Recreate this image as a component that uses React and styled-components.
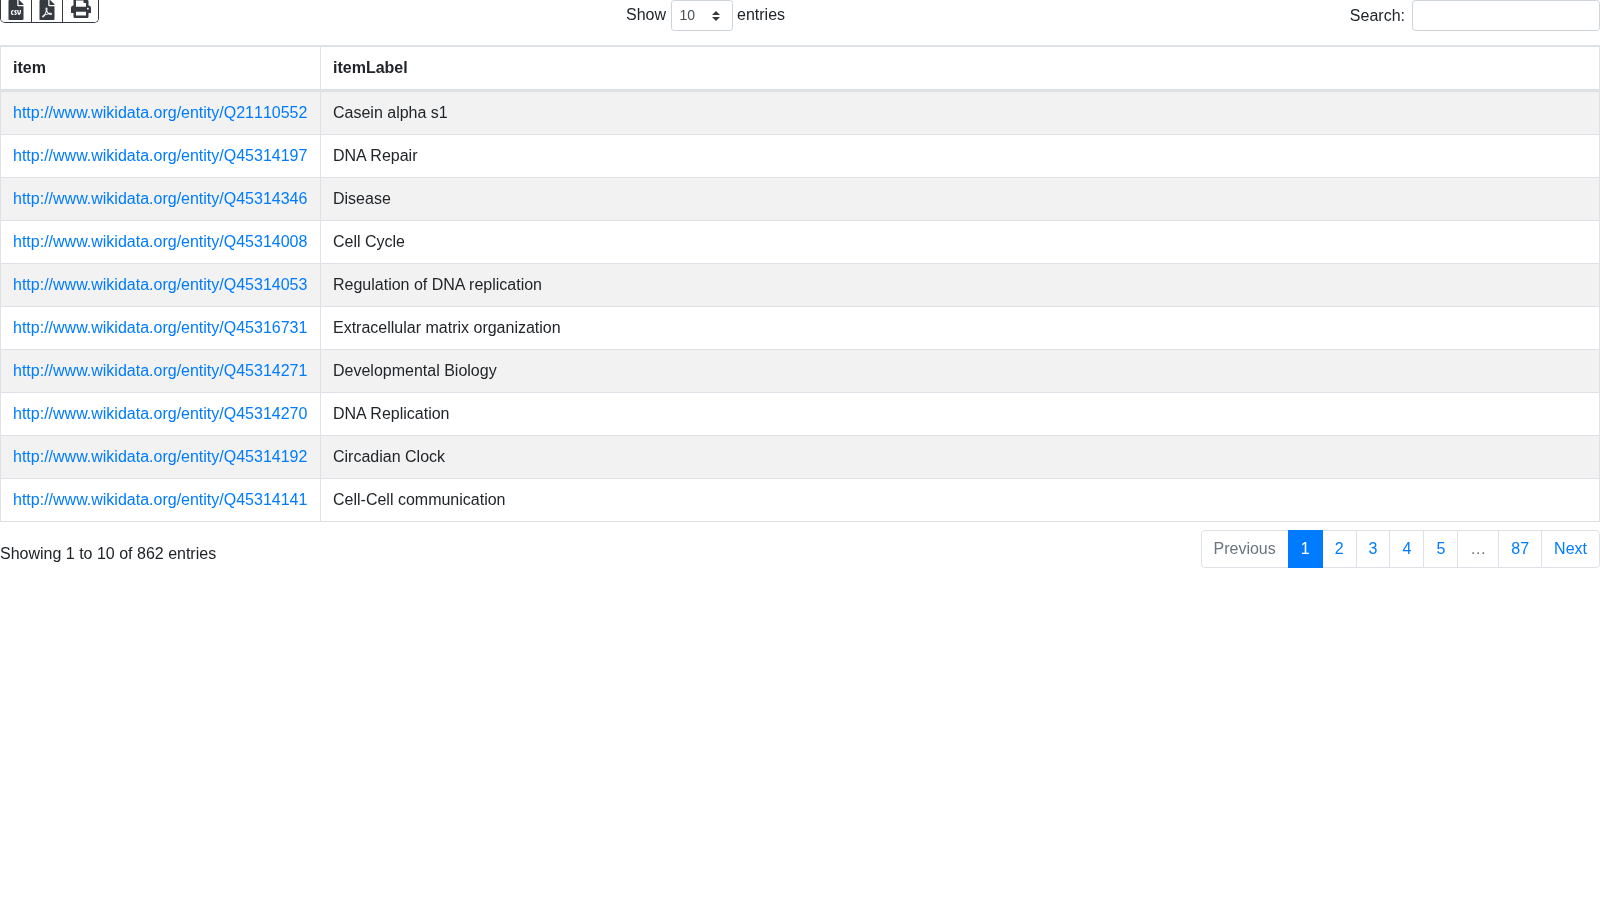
import React from 'react';
import styled, { createGlobalStyle } from 'styled-components';
import { FaFileCsv, FaFilePdf, FaPrint } from 'react-icons/fa';

const GlobalStyle = createGlobalStyle`
  html, body {
    margin: 0;
    background: #fff;
    color: #212529;
    font-family: "Liberation Sans", Arial, sans-serif;
    font-size: 16px;
  }
`;

const Page = styled.div`
  width: 1600px;
  height: 900px;
  overflow: hidden;
  will-change: transform;
`;

const TopBar = styled.div`
  display: grid;
  grid-template-columns: 626px 1fr auto;
  height: 45px;
  line-height: 24px;
`;

const ButtonGroup = styled.div`
  display: flex;
  align-self: flex-start;
  justify-self: start;
  height: 23px;
  border: 1px solid #343a40;
  border-top: 0;
  border-radius: 0 0 5px 5px;
  overflow: hidden;
  box-sizing: border-box;
`;

const IconButton = styled.button`
  display: flex;
  justify-content: center;
  align-items: flex-end;
  box-sizing: border-box;
  width: ${(p) => p.$width}px;
  height: 100%;
  margin: 0;
  padding: 0 0 ${(p) => p.$lift || 2}px;
  background: #fff;
  border: 0;
  border-right: 1px solid #343a40;
  color: #343a40;
  font-size: 20px;
  overflow: hidden;

  svg {
    flex-shrink: 0;
  }

  &:last-child {
    border-right: 0;
  }
`;

const LengthLabel = styled.label`
  display: flex;
  align-items: flex-start;
  height: 31px;
  gap: 4.5px;
  padding-top: 3px;
  line-height: 24px;
`;

const SelectBox = styled.span`
  position: relative;
  top: -3px;
  display: block;
  box-sizing: border-box;
  width: 62px;
  height: 31px;
  padding: 0 8px;
  border: 1px solid #ced4da;
  border-radius: 3.2px;
  color: #495057;
  font-size: 14px;
  line-height: 29px;
`;

const SelectArrows = styled.svg`
  position: absolute;
  top: 10px;
  right: 12px;
  width: 8px;
  height: 10px;
`;

const SearchLabel = styled.label`
  display: flex;
  align-items: flex-start;
  gap: 7px;
  padding-top: 4px;
`;

const SearchInput = styled.input`
  position: relative;
  top: -4px;
  box-sizing: border-box;
  width: 188px;
  height: 31px;
  padding: 4px 8px;
  border: 1px solid #ced4da;
  border-radius: 3.2px;
  outline: 0;
`;

const Table = styled.table`
  width: 100%;
  border-collapse: separate;
  border-spacing: 0;
  border: 1px solid #dee2e6;
  color: #212529;
`;

const HeadCell = styled.th`
  padding: 12px;
  border-top: 1px solid #dee2e6;
  border-right: 1px solid #dee2e6;
  border-bottom: 2px solid #dee2e6;
  text-align: left;
  font-weight: 700;
  width: ${(p) => p.$width || 'auto'};

  &:last-child {
    border-right: 0;
  }
`;

const Row = styled.tr`
  background: ${(p) => (p.$odd ? 'rgba(0, 0, 0, 0.05)' : 'transparent')};
`;

const Cell = styled.td`
  padding: 12px;
  border-top: 1px solid #dee2e6;
  border-right: 1px solid #dee2e6;

  &:last-child {
    border-right: 0;
  }
`;

const Link = styled.a`
  color: #007bff;
  text-decoration: none;
`;

// the reference does not tighten the "11" pair in the ids
const EntityId = styled.span`
  font-kerning: none;
`;

const Footer = styled.div`
  display: flex;
  justify-content: space-between;
  align-items: flex-start;
  padding-top: 8px;
`;

const Info = styled.div`
  padding-top: 12px;
  line-height: 24px;
`;

const Pagination = styled.ul`
  display: flex;
  margin: 0;
  padding: 0;
  list-style: none;
`;

const PageItem = styled.li`
  box-sizing: content-box;
  margin-left: -1px;
  padding: 8px 12px;
  border: 1px solid ${(p) => (p.$active ? '#007bff' : '#dee2e6')};
  background: ${(p) => (p.$active ? '#007bff' : '#fff')};
  color: ${(p) => (p.$active ? '#fff' : p.$disabled ? '#6c757d' : '#007bff')};
  line-height: 20px;
  position: ${(p) => (p.$active ? 'relative' : 'static')};

  &:first-child {
    margin-left: 0;
    border-radius: 4px 0 0 4px;
  }
  &:last-child {
    border-radius: 0 4px 4px 0;
  }
`;

const rows = [
  ['Q21110552', 'Casein alpha s1'],
  ['Q45314197', 'DNA Repair'],
  ['Q45314346', 'Disease'],
  ['Q45314008', 'Cell Cycle'],
  ['Q45314053', 'Regulation of DNA replication'],
  ['Q45316731', 'Extracellular matrix organization'],
  ['Q45314271', 'Developmental Biology'],
  ['Q45314270', 'DNA Replication'],
  ['Q45314192', 'Circadian Clock'],
  ['Q45314141', 'Cell-Cell communication'],
];

const pages = [
  { label: 'Previous', disabled: true },
  { label: '1', active: true },
  { label: '2' },
  { label: '3' },
  { label: '4' },
  { label: '5' },
  { label: '…', disabled: true },
  { label: '87' },
  { label: 'Next' },
];

const App = () => (
  <Page>
    <GlobalStyle />
    <TopBar>
      <ButtonGroup>
        <IconButton $width={31} aria-label='CSV'>
          <FaFileCsv />
        </IconButton>
        <IconButton $width={31} aria-label='PDF'>
          <FaFilePdf />
        </IconButton>
        <IconButton $width={35} $lift={4} aria-label='Print'>
          <FaPrint />
        </IconButton>
      </ButtonGroup>
      <LengthLabel>
        Show
        <SelectBox>
          10
          <SelectArrows viewBox='0 0 8 10'>
            <path d='M4 0 0 4h8zM4 10 0 6h8z' fill='#343a40' />
          </SelectArrows>
        </SelectBox>
        entries
      </LengthLabel>
      <SearchLabel>
        Search:
        <SearchInput type='search' />
      </SearchLabel>
    </TopBar>
    <Table>
      <thead>
        <tr>
          <HeadCell $width='295px'>item</HeadCell>
          <HeadCell>itemLabel</HeadCell>
        </tr>
      </thead>
      <tbody>
        {rows.map(([id, label], i) => (
          <Row key={id} $odd={i % 2 === 0}>
            <Cell>
              <Link href='#'>
                http://www.wikidata.org/entity/<EntityId>{id}</EntityId>
              </Link>
            </Cell>
            <Cell>{label}</Cell>
          </Row>
        ))}
      </tbody>
    </Table>
    <Footer>
      <Info>Showing 1 to 10 of 862 entries</Info>
      <Pagination>
        {pages.map((p) => (
          <PageItem key={p.label} $active={p.active} $disabled={p.disabled}>
            {p.label}
          </PageItem>
        ))}
      </Pagination>
    </Footer>
  </Page>
);

export default App;
